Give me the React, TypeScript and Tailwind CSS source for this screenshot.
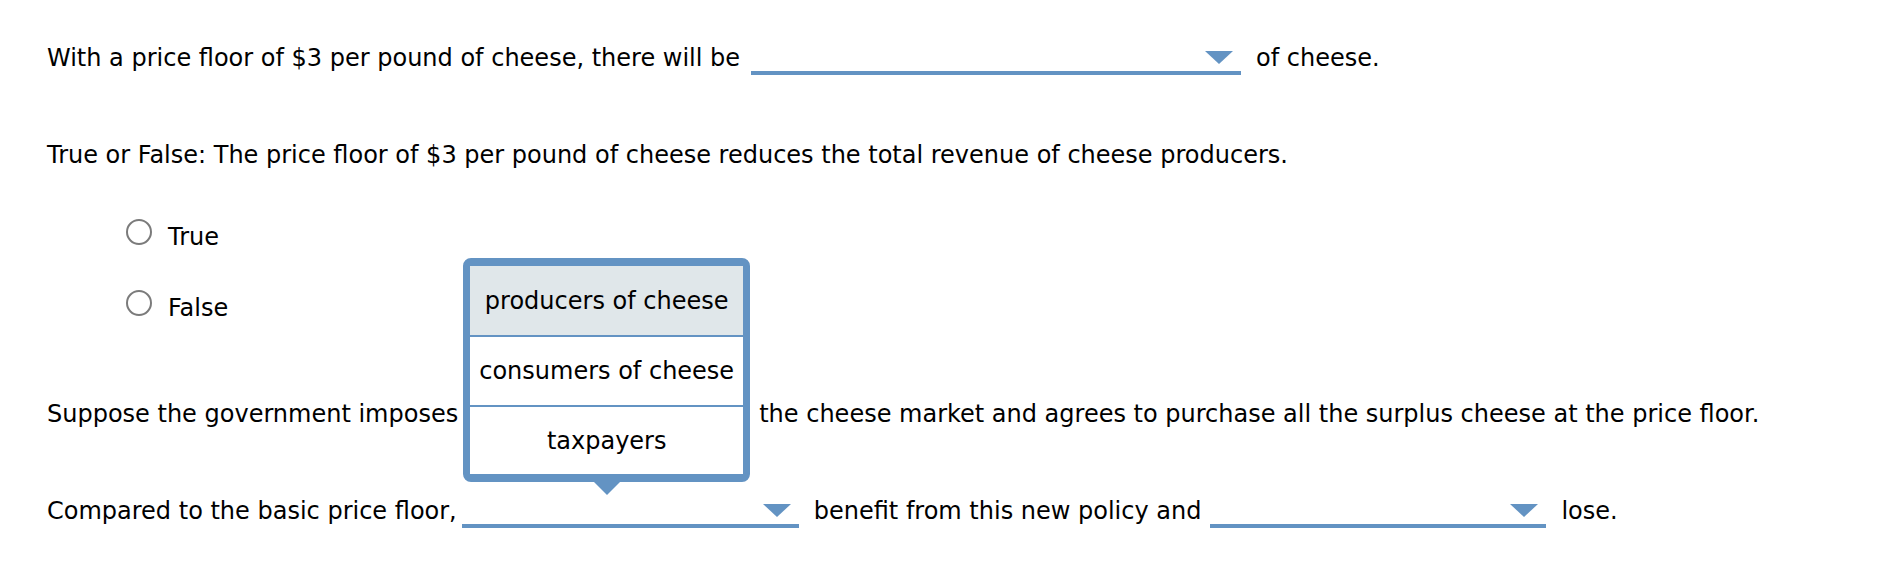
import React from 'react';

const BLUE = 'border-[#6393c3]';

const Arrow = () => (
  <svg width="28" height="13" viewBox="0 0 28 13" className="block">
    <polygon points="0,0 28,0 14,13" fill="#6393c3" />
  </svg>
);

// empty dropdown: blue underline with a triangle at the right end
const Select = ({ width, ml = 'ml-[9px]', children }: { width: string; ml?: string; children?: React.ReactNode }) => (
  <div className={`relative ${ml} mr-[15px] flex h-[35px] shrink-0 items-start justify-end border-b-4 ${BLUE} pt-[11px] pr-[8px] ${width}`}>
    <Arrow />
    {children}
  </div>
);

const Radio = ({ label }: { label: string }) => (
  <div className="flex items-start pl-[79px] leading-[36px]">
    <span className="mr-[16px] h-[26px] w-[26px] shrink-0 rounded-full border-2 border-[#7b7b7b] bg-white" />
    <span>{label}</span>
  </div>
);

const options = [
  { label: 'producers of cheese', h: 'h-[69px] bg-[#e0e7ea]' },
  { label: 'consumers of cheese', h: 'h-[70px] bg-white border-t-2 border-[#6393c3]' },
  { label: 'taxpayers', h: 'h-[69px] bg-white border-t-2 border-[#6393c3]' },
];

const Popup = () => (
  <div className="absolute left-0 top-[-138px] z-10 w-[287px]">
    <div className={`overflow-hidden rounded-[8px] border-x-[7px] border-y-[8px] ${BLUE} bg-white`}>
      {options.map((o) => (
        <div key={o.label} className={`flex items-center justify-center whitespace-nowrap ${o.h}`}>
          {o.label}
        </div>
      ))}
    </div>
    <div className="flex justify-center">
      <svg width="28" height="14" viewBox="0 0 28 14" className="-mt-[1px] block">
        <polygon points="0,0 28,0 14,14" fill="#6393c3" />
      </svg>
    </div>
  </div>
);

export default function App() {
  return (
    <div
      className="min-h-screen w-full bg-white pl-[47px] pt-[40px] text-[24px] text-black"
      style={{ fontFamily: '"DejaVu Sans", Verdana, sans-serif' }}
    >
      {/* question 1 */}
      <div className="flex items-start whitespace-nowrap leading-[36px]">
        <span>With a price floor of $3 per pound of cheese, there will be</span>
        <Select width="w-[490px]" ml="ml-[11px]" />
        <span>of cheese.</span>
      </div>

      {/* question 2 */}
      <div className="mt-[61px] whitespace-nowrap leading-[36px]">
        True or False: The price floor of $3 per pound of cheese reduces the total revenue of cheese producers.
      </div>
      <div className="mt-[46px]">
        <Radio label="True" />
      </div>
      <div className="mt-[35px]">
        <Radio label="False" />
      </div>

      {/* question 3 */}
      <div className="mt-[70px] flex items-start whitespace-nowrap leading-[36px]">
        <span>Suppose the government imposes</span>
        <Select width="w-[281px]" ml="ml-[5px]">
          <Popup />
        </Select>
        <span>the cheese market and agrees to purchase all the surplus cheese at the price floor.</span>
      </div>

      {/* question 4 */}
      <div className="mt-[61px] flex items-start whitespace-nowrap leading-[36px]">
        <span>Compared to the basic price floor,</span>
        <Select width="w-[337px]" ml="ml-[5px]" />
        <span>benefit from this new policy and</span>
        <Select width="w-[336px]" />
        <span>lose.</span>
      </div>
    </div>
  );
}
